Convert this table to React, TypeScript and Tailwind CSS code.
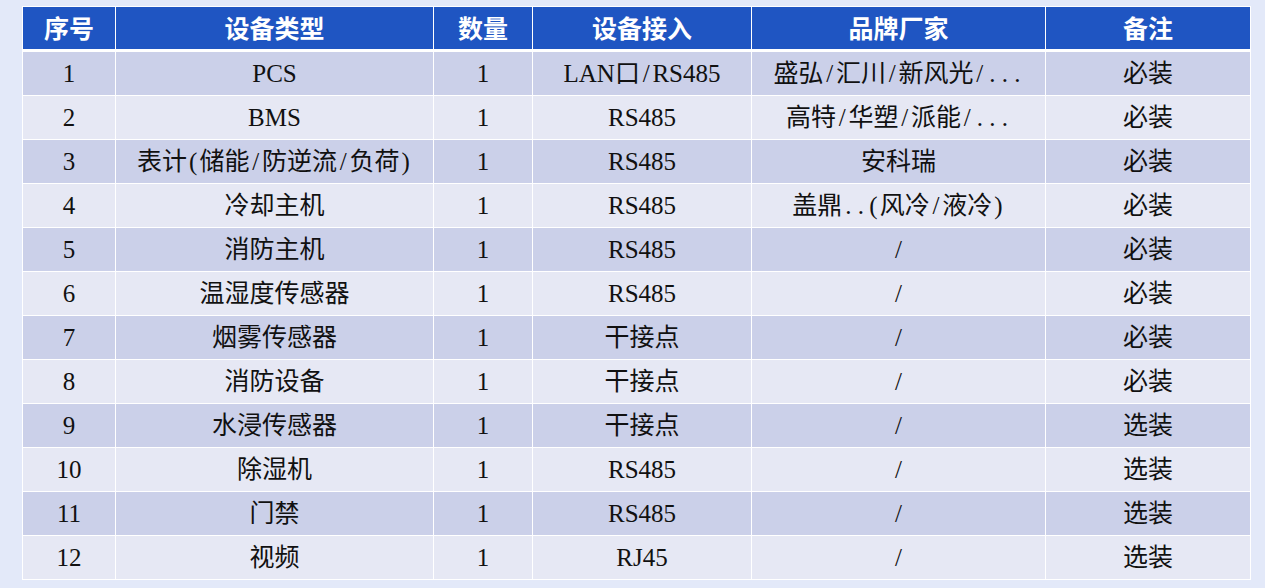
const headers = ["序号", "设备类型", "数量", "设备接入", "品牌厂家", "备注"];

const rows: string[][] = [
  ["1", "PCS", "1", "LAN口/RS485", "盛弘/汇川/新风光/...", "必装"],
  ["2", "BMS", "1", "RS485", "高特/华塑/派能/...", "必装"],
  ["3", "表计(储能/防逆流/负荷)", "1", "RS485", "安科瑞", "必装"],
  ["4", "冷却主机", "1", "RS485", "盖鼎..(风冷/液冷)", "必装"],
  ["5", "消防主机", "1", "RS485", "/", "必装"],
  ["6", "温湿度传感器", "1", "RS485", "/", "必装"],
  ["7", "烟雾传感器", "1", "干接点", "/", "必装"],
  ["8", "消防设备", "1", "干接点", "/", "必装"],
  ["9", "水浸传感器", "1", "干接点", "/", "选装"],
  ["10", "除湿机", "1", "RS485", "/", "选装"],
  ["11", "门禁", "1", "RS485", "/", "选装"],
  ["12", "视频", "1", "RJ45", "/", "选装"],
];

const cols = "grid grid-cols-[92px_317px_98px_218px_293px_204px] gap-px";

// Song-style fonts give punctuation a half-em box; mimic that for / . ( )
function CellText({ text }: { text: string }) {
  const parts: { s: string; punct: boolean }[] = [];
  for (const ch of Array.from(text)) {
    const punct = "/.()".includes(ch);
    const last = parts[parts.length - 1];
    if (!punct && last && !last.punct) last.s += ch;
    else parts.push({ s: ch, punct });
  }
  return (
    <>
      {parts.map((p, k) =>
        p.punct ? (
          <span key={k} className="inline-block w-[12.5px] text-center">
            {p.s}
          </span>
        ) : (
          <span key={k}>{p.s}</span>
        ),
      )}
    </>
  );
}

export default function App() {
  return (
    <div className="min-h-[588px] w-full bg-[#e3e9f9] pt-[6px] pl-[22px]">
      <div className="w-[1229px] bg-white p-px">
        <div className={`${cols} h-[42px]`}>
          {headers.map((h) => (
            <div
              key={h}
              className="flex items-center justify-center bg-[#1f55c2] text-[25px] font-bold text-white [font-family:'Noto_Sans_CJK_SC',sans-serif]"
            >
              {h}
            </div>
          ))}
        </div>
        <div className="mt-[3px] flex flex-col gap-px">
          {rows.map((r, i) => (
            <div key={i} className={`${cols} h-[43px]`}>
              {r.map((c, j) => (
                <div
                  key={j}
                  className={`flex items-center justify-center whitespace-nowrap text-[25px] text-[#111] [font-family:'Liberation_Serif','Noto_Sans_CJK_SC',serif] ${
                    i % 2 === 0 ? "bg-[#cbd0e9]" : "bg-[#e6e8f4]"
                  }`}
                >
                  <CellText text={c} />
                </div>
              ))}
            </div>
          ))}
        </div>
      </div>
    </div>
  );
}
